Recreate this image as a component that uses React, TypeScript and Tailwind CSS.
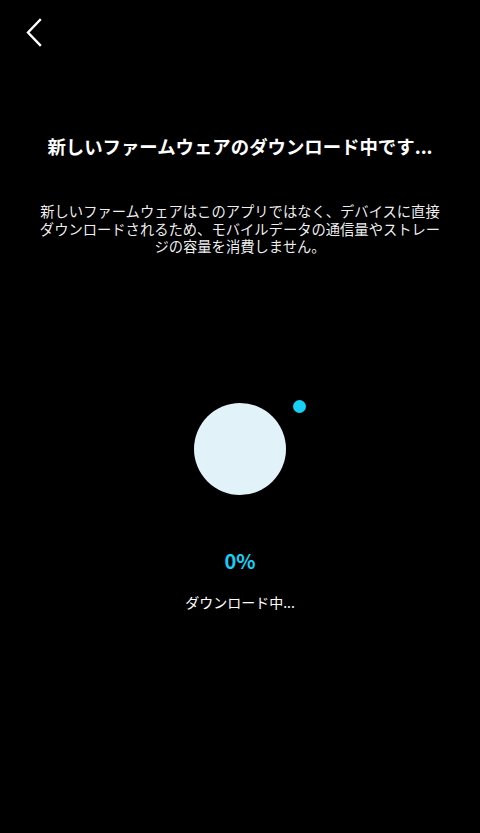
export default function App() {
  return (
    <div
      className="min-h-[833px] w-[480px] bg-black text-white flex flex-col"
      style={{ fontFamily: '"Noto Sans CJK JP", "Noto Sans", sans-serif' }}
    >
      {/* Header */}
      <div className="h-[64px] flex items-start pl-[24px] pt-[17px]">
        <button className="text-white">
          <svg width="20" height="30" viewBox="0 0 20 30" fill="none" stroke="currentColor" strokeWidth="2.4" strokeLinecap="square">
            <polyline points="16,3 4,15.5 16,28" />
          </svg>
        </button>
      </div>

      {/* Title */}
      <h1 className="mt-[68px] text-center text-[18.4px] font-bold leading-[28px]">
        新しいファームウェアのダウンロード中です...
      </h1>

      {/* Description */}
      <p className="mt-[42px] px-[36px] text-center text-[14.3px] leading-[17.5px] text-white/95">
        新しいファームウェアはこのアプリではなく、デバイスに直接ダウンロードされるため、モバイルデータの通信量やストレージの容量を消費しません。
      </p>

      {/* Progress */}
      <div className="mt-[148px] flex justify-center">
        <div className="relative w-[92px] h-[92px]">
          <div className="w-full h-full rounded-full bg-[#e1f2f8]" />
          <div className="absolute top-[-3px] left-[99px] w-[13px] h-[13px] rounded-full bg-[#18cff6]" />
        </div>
      </div>

      <div className="mt-[51px] text-center text-[20px] font-semibold leading-[30px] text-[#18cff6]">0%</div>
      <div className="mt-[16px] text-center text-[14px] leading-[20px]">ダウンロード中...</div>
    </div>
  );
}
